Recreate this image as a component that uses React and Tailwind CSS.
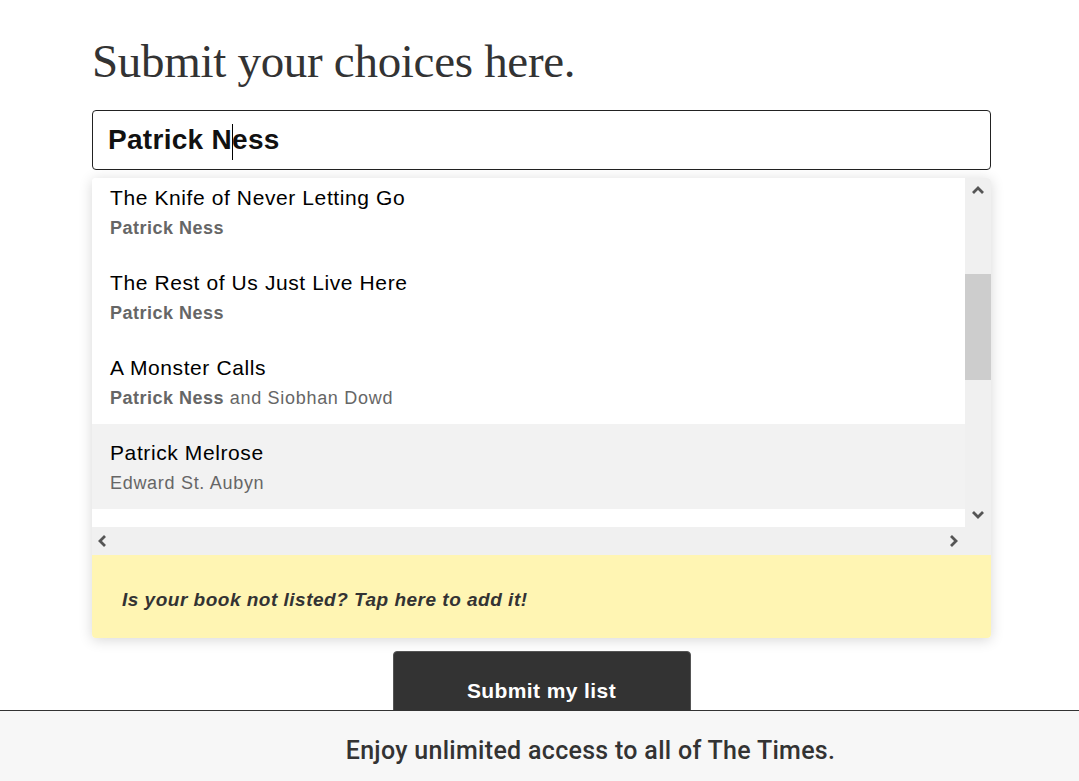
import React from "react";

const books = [
  { title: "The Knife of Never Letting Go", author: "Patrick Ness", rest: "" },
  { title: "The Rest of Us Just Live Here", author: "Patrick Ness", rest: "" },
  { title: "A Monster Calls", author: "Patrick Ness", rest: " and Siobhan Dowd" },
  { title: "Patrick Melrose", author: "", rest: "Edward St. Aubyn", active: true },
];

const sans = { fontFamily: '"Liberation Sans", Arial, sans-serif' };

// Chevron drawn for the fake scrollbar buttons
const Chevron = ({ dir }) => {
  const points = {
    up: "2,9 7,4 12,9",
    down: "2,5 7,10 12,5",
    left: "9,2 4,7 9,12",
    right: "5,2 10,7 5,12",
  }[dir];
  return (
    <svg width="14" height="14" viewBox="0 0 14 14" className="block">
      <polyline points={points} fill="none" stroke="#555" strokeWidth="2.8" />
    </svg>
  );
};

const BookRow = ({ book }) => (
  <div
    className={`pl-[18px] pt-[14px] pb-[11px] h-[85px] ${
      book.active ? "bg-[#f2f2f2]" : "bg-white"
    }`}
  >
    <div className="text-[21px] leading-[30px] tracking-[0.6px] text-black">{book.title}</div>
    <div className="text-[18px] leading-[30px] tracking-[0.7px] text-[#666]">
      {book.author && <span className="font-bold tracking-[0.5px]">{book.author}</span>}
      {book.rest}
    </div>
  </div>
);

export default function App() {
  return (
    <div className="min-h-[781px] bg-white" style={sans}>
      <div className="ml-[92px] w-[899px]">
        {/* Heading */}
        <h1
          className="pt-[33px] text-[47px] leading-[56px] text-[#333] tracking-[-0.3px]"
          style={{ fontFamily: '"Liberation Serif", "Times New Roman", serif' }}
        >
          Submit your choices here.
        </h1>

        {/* Search input */}
        <div className="mt-[21px] h-[60px] rounded-[4px] border border-[#222] flex items-center pl-[15px] pt-[4px]">
          <span className="text-[28px] font-bold text-[#111] leading-none tracking-[0.3px]">
            Patrick N
            <span className="inline-block w-px h-[36px] bg-black align-middle -mr-px" />
            ess
          </span>
        </div>

        {/* Dropdown */}
        <div className="mt-[8px] rounded-[4px] shadow-[0_2px_14px_rgba(0,0,0,0.16)] overflow-hidden">
          <div className="flex h-[349px]">
            <div className="flex-1 overflow-hidden">
              <div className="-mt-[9px]">
                {books.map((b) => (
                  <BookRow key={b.title} book={b} />
                ))}
                <div className="h-[85px] bg-white" />
              </div>
            </div>
            {/* vertical scrollbar */}
            <div className="w-[26px] bg-[#f0f0f0] flex flex-col items-center">
              <div className="h-[24px] flex items-center justify-center pt-[1px]">
                <Chevron dir="up" />
              </div>
              <div className="flex-1 w-full pt-[72px]">
                <div className="h-[106px] w-full bg-[#cdcdcd]" />
              </div>
              <div className="h-[24px] flex items-center justify-center pb-[2px]">
                <Chevron dir="down" />
              </div>
            </div>
          </div>
          {/* horizontal scrollbar */}
          <div className="h-[28px] bg-[#f0f0f0] flex items-center justify-between pl-[4px] pr-[31px]">
            <Chevron dir="left" />
            <Chevron dir="right" />
          </div>
          {/* Not listed */}
          <div className="h-[83px] bg-[#fff5b3] flex items-center pl-[30px] pt-[7px]">
            <span className="text-[19px] font-bold italic text-[#333] tracking-[0.5px]">
              Is your book not listed? Tap here to add it!
            </span>
          </div>
        </div>

        {/* Submit */}
        <button className="mt-[13px] mx-auto flex w-[298px] h-[80px] items-center justify-center rounded-[4px] bg-[#333] border border-[#555] text-white text-[21px] font-bold tracking-[0.4px]">
          Submit my list
        </button>
      </div>

      {/* Bottom bar */}
      <div className="fixed bottom-0 left-0 right-0 h-[71px] border-t border-[#333] bg-[#f7f7f7] flex items-center justify-center pl-[102px] pt-[10px]">
        <span
          className="text-[25px] font-medium text-[#333] tracking-[0.3px]"
          style={{ fontFamily: 'Roboto, "Liberation Sans", sans-serif' }}
        >
          Enjoy unlimited access to all of The Times.
        </span>
      </div>
    </div>
  );
}
